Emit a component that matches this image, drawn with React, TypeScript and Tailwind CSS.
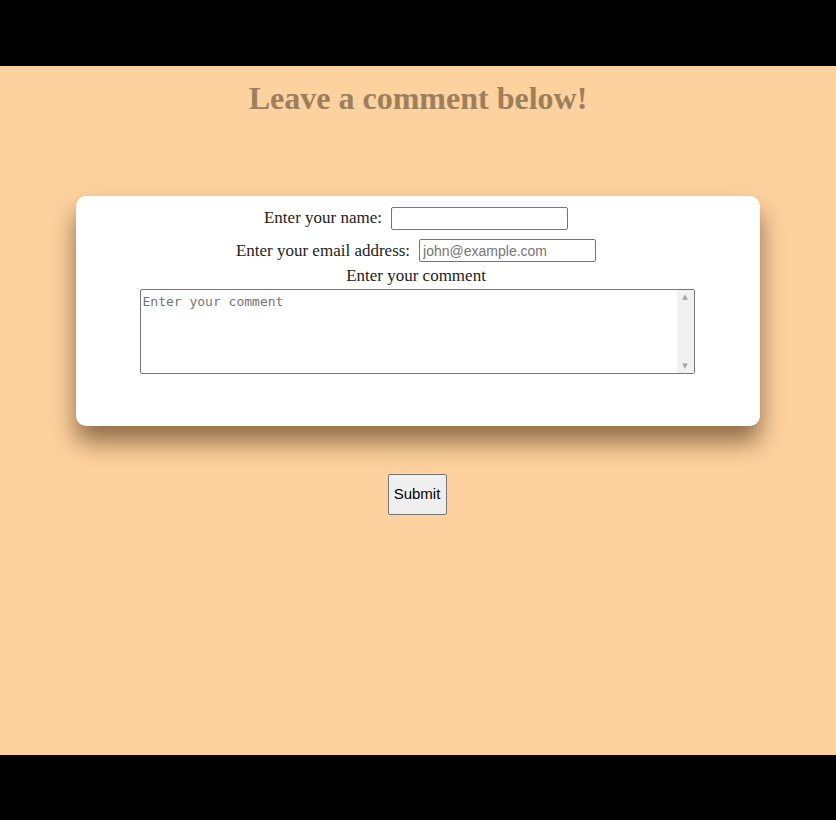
export default function App() {
  return (
    <div className="bg-black py-[66px]">
      <div className="h-[689px] bg-[#fed29f] flex flex-col items-center">
        <h1 className="mt-[12px] text-[32px] leading-[40px] font-bold text-[#9c7f5c] font-['Liberation_Serif',serif]">
          Leave a comment below!
        </h1>
        <div className="mt-[78px] w-[684px] h-[230px] bg-white rounded-[10px] shadow-[0_16px_24px_rgba(70,40,10,0.6)] flex flex-col items-center pt-[11px] pr-[4px] font-['Liberation_Serif',serif] text-[17px] text-[#222]">
          <div className="flex items-center gap-[9px] h-[22px]">
            <label>Enter your name:</label>
            <input
              type="text"
              className="w-[177px] h-[23px] border border-[#767676] rounded-[2px] px-[3px] text-[14px] font-['Liberation_Sans',sans-serif] outline-none"
            />
          </div>
          <div className="flex items-center gap-[9px] h-[23px] mt-[10px]">
            <label>Enter your email address:</label>
            <input
              type="email"
              placeholder="john@example.com"
              className="w-[177px] h-[23px] border border-[#767676] rounded-[2px] px-[3px] text-[14px] font-['Liberation_Sans',sans-serif] placeholder:text-[#757575] outline-none"
            />
          </div>
          <label className="mt-[2px] leading-[24px]">Enter your comment</label>
          <div className="mt-[1px] ml-[2px] w-[555px] h-[85px] border border-[#767676] rounded-[2px] flex">
            <textarea
              placeholder="Enter your comment"
              className="flex-1 h-full px-[2px] py-[2px] text-[13px] font-['DejaVu_Sans_Mono',monospace] placeholder:text-[#757575] resize-none outline-none"
            />
            <div className="w-[17px] h-full bg-[#f1f1f1] flex flex-col justify-between items-center py-[3px] text-[#a3a3a3] text-[7px] leading-[8px] font-['DejaVu_Sans',sans-serif]">
              <span>▲</span>
              <span>▼</span>
            </div>
          </div>
        </div>
        <button className="mt-[48px] mr-[2px] w-[59px] h-[41px] bg-[#efefef] border border-[#767676] rounded-[2px] text-[15px] text-black font-['Liberation_Sans',sans-serif]">
          Submit
        </button>
      </div>
    </div>
  );
}
